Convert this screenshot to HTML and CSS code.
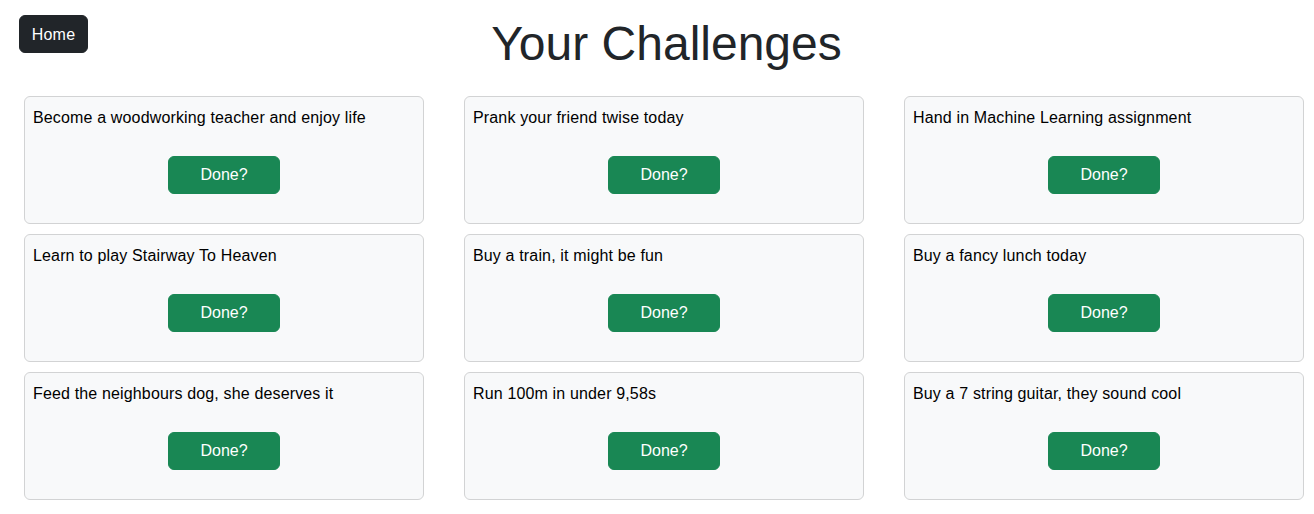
FILE: index.html
```html
<!DOCTYPE html>
<html lang="en">
<head>
<meta charset="utf-8">
<title>Your Challenges</title>
<link rel="stylesheet" href="styles.css">
</head>
<body>
<header class="header">
  <a class="btn btn-home" href="#">Home</a>
  <h1 class="title">Your Challenges</h1>
  <span></span>
</header>
<main class="grid">
  <div class="card"><p class="card-text">Become a woodworking teacher and enjoy life</p><button class="btn btn-done">Done?</button></div>
  <div class="card"><p class="card-text">Prank your friend twise today</p><button class="btn btn-done">Done?</button></div>
  <div class="card"><p class="card-text">Hand in Machine Learning assignment</p><button class="btn btn-done">Done?</button></div>
  <div class="card"><p class="card-text">Learn to play Stairway To Heaven</p><button class="btn btn-done">Done?</button></div>
  <div class="card"><p class="card-text">Buy a train, it might be fun</p><button class="btn btn-done">Done?</button></div>
  <div class="card"><p class="card-text">Buy a fancy lunch today</p><button class="btn btn-done">Done?</button></div>
  <div class="card"><p class="card-text">Feed the neighbours dog, she deserves it</p><button class="btn btn-done">Done?</button></div>
  <div class="card"><p class="card-text">Run 100m in under 9,58s</p><button class="btn btn-done">Done?</button></div>
  <div class="card"><p class="card-text">Buy a 7 string guitar, they sound cool</p><button class="btn btn-done">Done?</button></div>
</main>
</body>
</html>
```
FILE: styles.css
```css
* { box-sizing: border-box; }
body {
  margin: 0;
  background: #fff;
  color: #212529;
  font-family: "Liberation Sans", Arial, sans-serif;
  font-size: 16px;
  line-height: 24px;
}
.header {
  display: grid;
  grid-template-columns: 1fr auto 1fr;
  align-items: start;
  padding: 15px 0 0 19px;
}
.btn {
  display: inline-block;
  border: 1px solid transparent;
  border-radius: 6px;
  padding: 6px 12px;
  font-family: inherit;
  font-size: 16px;
  line-height: 24px;
  text-align: center;
  text-decoration: none;
  cursor: pointer;
}
.btn-home {
  justify-self: start;
  width: 69px;
  padding: 7px 0 5px;
  background: #212529;
  border-color: #212529;
  color: #fff;
  letter-spacing: 0.2px;
}
.title {
  margin: 0;
  font-size: 48px;
  font-weight: 400;
  line-height: 58px;
  color: #212529;
}
.grid {
  display: grid;
  grid-template-columns: repeat(3, 400px);
  column-gap: 40px;
  row-gap: 10px;
  margin-top: 23px;
  padding-left: 24px;
}
.card {
  display: flex;
  flex-direction: column;
  height: 128px;
  padding: 9px 8px 8px;
  background: #f8f9fa;
  border: 1px solid #d2d3d4;
  border-radius: 6px;
}
.card-text {
  margin: 0;
  color: #000;
  letter-spacing: 0.15px;
}
.btn-done {
  align-self: center;
  width: 112px;
  margin-top: 26px;
  background: #198754;
  border-color: #198754;
  color: #fff;
}
```
